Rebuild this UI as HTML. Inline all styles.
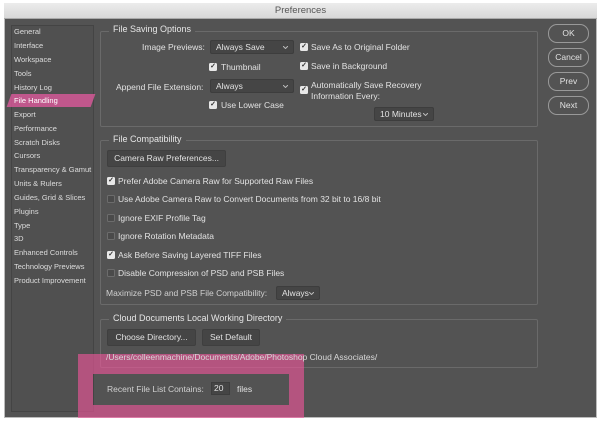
<!DOCTYPE html>
<html><head><meta charset="utf-8"><style>
*{box-sizing:border-box;margin:0;padding:0}
body{width:600px;height:424px;background:#fff;position:relative;overflow:hidden;font-family:"Liberation Sans",sans-serif;color:#e2e2e2;font-size:8.5px}
.a{position:absolute;white-space:nowrap}
#win{position:absolute;left:4px;top:3px;width:593px;height:415px;background:#535353;border:1px solid #bbb}
#title{position:absolute;left:4px;top:3px;width:593px;height:16px;background:linear-gradient(#ececec,#d8d8d8);color:#555;font-size:9.5px;text-align:center;line-height:16px;border-bottom:1px solid #aaa}
#side{position:absolute;left:11px;top:25px;width:83px;height:387px;border:1px solid #444;background:#505050}
.si{position:absolute;left:14px;font-size:7.5px;color:#ddd}
.box{position:absolute;border:1px solid #6a6a6a;border-radius:2px}
.lg{position:absolute;background:#535353;padding:0 4px;font-size:9px;color:#e6e6e6}
.dd{position:absolute;background:#454545;border:1px solid #3d3d3d;border-radius:2px;height:14px;line-height:12px;padding-left:5px;font-size:8.5px}
.dd svg{position:absolute;right:5px;top:5px}
.cb{position:absolute;width:8px;height:8px;border-radius:1.5px;background:#e8e8e8;color:#333;font-size:7px;line-height:8px;text-align:center;font-weight:bold}
.cb.off{background:#4a4a4a;border:1px solid #6c6c6c}
.bt{position:absolute;background:#454545;border:1px solid #3f3f3f;border-radius:2px;height:17px;line-height:15px;text-align:center;font-size:8.5px}
.rb{position:absolute;left:548px;width:41px;height:19px;border:1px solid #999;border-radius:9px;text-align:center;line-height:17px;font-size:8.5px}
</style></head><body>
<div id="win"></div>
<div id="title">Preferences</div>
<div id="side"></div>
<div class="si a" style="top:27px">General</div>
<div class="si a" style="top:41px">Interface</div>
<div class="si a" style="top:55px">Workspace</div>
<div class="si a" style="top:69px">Tools</div>
<div class="si a" style="top:83px">History Log</div>
<div class="a" style="left:9px;top:94px;width:84px;height:13px;background:rgba(230,90,160,.75);transform:skewX(-20deg)"></div>
<div class="si a" style="top:96px;color:#fff">File Handling</div>
<div class="si a" style="top:110px">Export</div>
<div class="si a" style="top:124px">Performance</div>
<div class="si a" style="top:138px">Scratch Disks</div>
<div class="si a" style="top:151px">Cursors</div>
<div class="si a" style="top:165px">Transparency &amp; Gamut</div>
<div class="si a" style="top:179px">Units &amp; Rulers</div>
<div class="si a" style="top:193px">Guides, Grid &amp; Slices</div>
<div class="si a" style="top:207px">Plugins</div>
<div class="si a" style="top:221px">Type</div>
<div class="si a" style="top:234px">3D</div>
<div class="si a" style="top:248px">Enhanced Controls</div>
<div class="si a" style="top:262px">Technology Previews</div>
<div class="si a" style="top:276px">Product Improvement</div>

<div class="box" style="left:100px;top:31px;width:438px;height:96px"></div>
<div class="lg a" style="left:109px;top:24px">File Saving Options</div>
<div class="a" style="left:142px;top:42px">Image Previews:</div>
<div class="dd" style="left:210px;top:40px;width:84px">Always Save<svg width="5" height="3"><path d="M0 0L2.5 2.5L5 0" stroke="#bbb" fill="none"/></svg></div>
<div class="cb" style="left:209px;top:63px">✓</div><div class="a" style="left:221px;top:62px">Thumbnail</div>
<div class="a" style="left:116px;top:82px">Append File Extension:</div>
<div class="dd" style="left:210px;top:79px;width:84px">Always<svg width="5" height="3"><path d="M0 0L2.5 2.5L5 0" stroke="#bbb" fill="none"/></svg></div>
<div class="cb" style="left:209px;top:101px">✓</div><div class="a" style="left:221px;top:100px">Use Lower Case</div>
<div class="cb" style="left:300px;top:43px">✓</div><div class="a" style="left:311px;top:42px">Save As to Original Folder</div>
<div class="cb" style="left:300px;top:62px">✓</div><div class="a" style="left:311px;top:61px">Save in Background</div>
<div class="cb" style="left:300px;top:86px">✓</div><div class="a" style="left:311px;top:80px;line-height:11px">Automatically Save Recovery<br>Information Every:</div>
<div class="dd" style="left:374px;top:107px;width:60px">10 Minutes<svg width="5" height="3"><path d="M0 0L2.5 2.5L5 0" stroke="#bbb" fill="none"/></svg></div>

<div class="box" style="left:100px;top:140px;width:438px;height:165px"></div>
<div class="lg a" style="left:109px;top:134px">File Compatibility</div>
<div class="bt" style="left:107px;top:150px;width:119px">Camera Raw Preferences...</div>
<div class="cb" style="left:107px;top:177px">✓</div><div class="a" style="left:118px;top:176px">Prefer Adobe Camera Raw for Supported Raw Files</div>
<div class="cb off" style="left:107px;top:195px"></div><div class="a" style="left:118px;top:194px">Use Adobe Camera Raw to Convert Documents from 32 bit to 16/8 bit</div>
<div class="cb off" style="left:107px;top:214px"></div><div class="a" style="left:118px;top:213px">Ignore EXIF Profile Tag</div>
<div class="cb off" style="left:107px;top:232px"></div><div class="a" style="left:118px;top:231px">Ignore Rotation Metadata</div>
<div class="cb" style="left:107px;top:251px">✓</div><div class="a" style="left:118px;top:250px">Ask Before Saving Layered TIFF Files</div>
<div class="cb off" style="left:107px;top:269px"></div><div class="a" style="left:118px;top:268px">Disable Compression of PSD and PSB Files</div>
<div class="a" style="left:106px;top:288px;color:#d0d0d0">Maximize PSD and PSB File Compatibility:</div>
<div class="dd" style="left:276px;top:286px;width:44px">Always<svg width="5" height="3"><path d="M0 0L2.5 2.5L5 0" stroke="#bbb" fill="none"/></svg></div>

<div class="box" style="left:100px;top:319px;width:438px;height:49px"></div>
<div class="lg a" style="left:109px;top:313px">Cloud Documents Local Working Directory</div>
<div class="bt" style="left:107px;top:329px;width:89px">Choose Directory...</div>
<div class="bt" style="left:202px;top:329px;width:58px">Set Default</div>

<div class="a" style="left:78px;top:354px;width:226px;height:64px;border:solid rgba(240,85,155,.62);border-width:20px 15px 13px 15px"></div>
<div class="a" style="left:106px;top:352px;color:#d8d8d8">/Users/colleenmachine/Documents/Adobe/Photoshop Cloud Associates/</div>
<div class="a" style="left:107px;top:384px;color:#d0d0d0">Recent File List Contains:</div>
<div class="a" style="left:211px;top:382px;width:19px;height:13px;background:#454545;border:1px solid #3d3d3d;padding-left:2px;line-height:11px">20</div>
<div class="a" style="left:237px;top:384px">files</div>

<div class="rb" style="top:24px">OK</div>
<div class="rb" style="top:48px">Cancel</div>
<div class="rb" style="top:72px">Prev</div>
<div class="rb" style="top:96px">Next</div>
</body></html>
